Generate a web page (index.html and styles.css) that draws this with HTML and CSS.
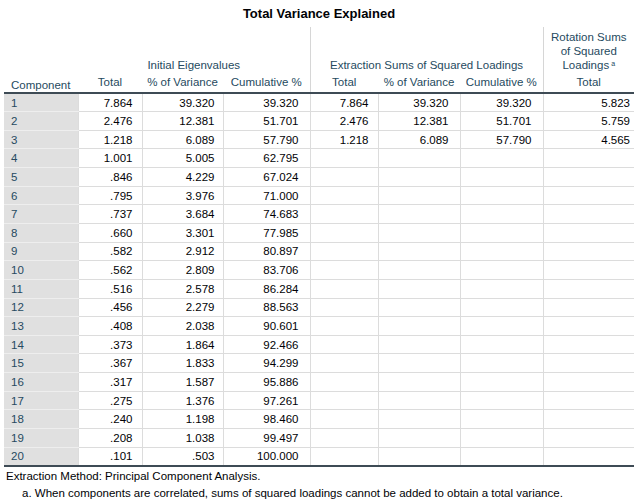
FILE: index.html
```html
<!DOCTYPE html>
<html>
<head>
<meta charset="utf-8">
<link rel="stylesheet" href="styles.css">
</head>
<body>
<div class="wrap">
  <div class="title">Total Variance Explained</div>
  <table class="tve">
    <colgroup>
      <col class="c1"><col class="c2"><col class="c3"><col class="c4">
      <col class="c5"><col class="c6"><col class="c7"><col class="c8">
    </colgroup>
    <thead>
      <tr class="grp">
        <th rowspan="2" class="comp">Component</th>
        <th colspan="3">Initial Eigenvalues</th>
        <th colspan="3" class="sep">Extraction Sums of Squared Loadings</th>
        <th class="sep rot">Rotation Sums of Squared Loadings<sup>a</sup></th>
      </tr>
      <tr class="sub">
        <th>Total</th><th>% of Variance</th><th>Cumulative %</th>
        <th class="sep">Total</th><th>% of Variance</th><th>Cumulative %</th>
        <th class="sep">Total</th>
      </tr>
    </thead>
    <tbody>
      <tr><th>1</th><td class="p2">7.864</td><td class="p3">39.320</td><td class="p4">39.320</td><td class="p5">7.864</td><td class="p6">39.320</td><td class="p7">39.320</td><td class="p8">5.823</td></tr>
      <tr><th>2</th><td class="p2">2.476</td><td class="p3">12.381</td><td class="p4">51.701</td><td class="p5">2.476</td><td class="p6">12.381</td><td class="p7">51.701</td><td class="p8">5.759</td></tr>
      <tr><th>3</th><td class="p2">1.218</td><td class="p3">6.089</td><td class="p4">57.790</td><td class="p5">1.218</td><td class="p6">6.089</td><td class="p7">57.790</td><td class="p8">4.565</td></tr>
      <tr><th>4</th><td class="p2">1.001</td><td class="p3">5.005</td><td class="p4">62.795</td><td></td><td></td><td></td><td></td></tr>
      <tr><th>5</th><td class="p2">.846</td><td class="p3">4.229</td><td class="p4">67.024</td><td></td><td></td><td></td><td></td></tr>
      <tr><th>6</th><td class="p2">.795</td><td class="p3">3.976</td><td class="p4">71.000</td><td></td><td></td><td></td><td></td></tr>
      <tr><th>7</th><td class="p2">.737</td><td class="p3">3.684</td><td class="p4">74.683</td><td></td><td></td><td></td><td></td></tr>
      <tr><th>8</th><td class="p2">.660</td><td class="p3">3.301</td><td class="p4">77.985</td><td></td><td></td><td></td><td></td></tr>
      <tr><th>9</th><td class="p2">.582</td><td class="p3">2.912</td><td class="p4">80.897</td><td></td><td></td><td></td><td></td></tr>
      <tr><th>10</th><td class="p2">.562</td><td class="p3">2.809</td><td class="p4">83.706</td><td></td><td></td><td></td><td></td></tr>
      <tr><th>11</th><td class="p2">.516</td><td class="p3">2.578</td><td class="p4">86.284</td><td></td><td></td><td></td><td></td></tr>
      <tr><th>12</th><td class="p2">.456</td><td class="p3">2.279</td><td class="p4">88.563</td><td></td><td></td><td></td><td></td></tr>
      <tr><th>13</th><td class="p2">.408</td><td class="p3">2.038</td><td class="p4">90.601</td><td></td><td></td><td></td><td></td></tr>
      <tr><th>14</th><td class="p2">.373</td><td class="p3">1.864</td><td class="p4">92.466</td><td></td><td></td><td></td><td></td></tr>
      <tr><th>15</th><td class="p2">.367</td><td class="p3">1.833</td><td class="p4">94.299</td><td></td><td></td><td></td><td></td></tr>
      <tr><th>16</th><td class="p2">.317</td><td class="p3">1.587</td><td class="p4">95.886</td><td></td><td></td><td></td><td></td></tr>
      <tr><th>17</th><td class="p2">.275</td><td class="p3">1.376</td><td class="p4">97.261</td><td></td><td></td><td></td><td></td></tr>
      <tr><th>18</th><td class="p2">.240</td><td class="p3">1.198</td><td class="p4">98.460</td><td></td><td></td><td></td><td></td></tr>
      <tr><th>19</th><td class="p2">.208</td><td class="p3">1.038</td><td class="p4">99.497</td><td></td><td></td><td></td><td></td></tr>
      <tr class="last"><th>20</th><td class="p2">.101</td><td class="p3">.503</td><td class="p4">100.000</td><td></td><td></td><td></td><td></td></tr>
    </tbody>
  </table>
  <div class="note">Extraction Method: Principal Component Analysis.</div>
  <div class="note fn">a. When components are correlated, sums of squared loadings cannot be added to obtain a total variance.</div>
</div>
</body>
</html>
```
FILE: styles.css
```css
html, body {
  margin: 0;
  padding: 0;
  background: #ffffff;
}
body {
  font-family: "Liberation Sans", Arial, sans-serif;
  font-size: 11.5px;
  color: #010205;
}
.wrap {
  padding-left: 4px;
  width: 630px;
}
.title {
  height: 27px;
  line-height: 28px;
  text-align: center;
  font-weight: bold;
  font-size: 13px;
  color: #010205;
}
.tve {
  border-collapse: collapse;
  table-layout: fixed;
  width: 630px;
}
.c1 { width: 74px; }
.c2 { width: 64px; }
.c3 { width: 81px; }
.c4 { width: 87px; }
.c5 { width: 68px; }
.c6 { width: 82px; }
.c7 { width: 83px; }
.c8 { width: 91px; }

.tve th, .tve td {
  padding: 0;
  font-weight: normal;
  white-space: nowrap;
  box-sizing: border-box;
}
.tve thead th {
  color: #264a60;
  text-align: center;
  vertical-align: bottom;
}
.grp th {
  height: 47px;
  padding-bottom: 2px;
  line-height: 14px;
}
.grp th.rot {
  white-space: normal;
  padding: 0 5px 2px;
}
.grp th.comp {
  text-align: left;
  padding-left: 7px;
  padding-bottom: 0;
  border-bottom: 2px solid #3e4b55;
}
.sub th {
  height: 19px;
  line-height: 14px;
  padding-bottom: 3px;
  border-bottom: 2px solid #3e4b55;
}
.tve thead th.sep {
  border-left: 1px solid #d6d6d6;
}
sup {
  font-size: 7px;
  line-height: 0;
  vertical-align: 3px;
  margin-left: 2px;
}
.tve tbody tr {
  height: 18.65px;
}
.tve tbody th {
  background: #e0e0e0;
  color: #264a60;
  text-align: left;
  padding-left: 7px;
  border-bottom: 1px solid #eeeeee;
}
.tve tbody td {
  text-align: right;
  border-bottom: 1px solid #dcdcdc;
  border-left: 1px solid #dcdcdc;
}
.tve tbody tr.last th,
.tve tbody tr.last td {
  border-bottom: 2px solid #3e4b55;
}
.p2 { padding-right: 9px !important; }
.p3 { padding-right: 8px !important; }
.p4 { padding-right: 11px !important; }
.p5 { padding-right: 9px !important; }
.p6 { padding-right: 11px !important; }
.p7 { padding-right: 11px !important; }
.p8 { padding-right: 4px !important; }
.note {
  line-height: 16px;
  padding-left: 2px;
  margin-top: 1px;
}
.note.fn {
  padding-left: 18px;
  margin-top: 1px;
}
```
